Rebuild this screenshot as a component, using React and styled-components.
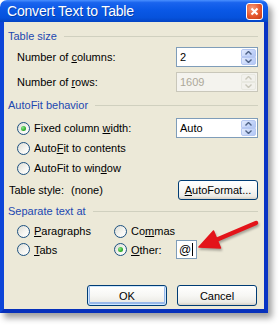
import React from 'react';
import styled, { createGlobalStyle, css } from 'styled-components';

const GlobalStyle = createGlobalStyle`
  html, body {
    margin: 0;
    padding: 0;
    background: #ffffff;
  }
  body {
    font-family: 'Liberation Sans', Arial, sans-serif;
    font-size: 11px;
    color: #000000;
  }
`;

const Page = styled.div`
  position: relative;
  width: 279px;
  height: 326px;
`;

const Window = styled.div`
  width: 268px;
  display: flex;
  flex-direction: column;
  border-radius: 7px 7px 0 0;
  box-shadow: 4px 5px 6px rgba(0, 0, 0, 0.38);
`;

const TitleBar = styled.div`
  height: 22px;
  display: flex;
  align-items: center;
  justify-content: space-between;
  padding: 0 5px 0 7px;
  border-radius: 7px 7px 0 0;
  background: linear-gradient(
    #4a90ff 0%,
    #1a64ee 12%,
    #0a58e6 45%,
    #0652dc 80%,
    #0444c4 100%
  );
  color: #ffffff;
`;

const Title = styled.span`
  font-family: 'Liberation Sans', Arial, sans-serif;
  font-size: 14px;
  letter-spacing: -0.2px;
  text-shadow: 1px 1px 0 rgba(0, 0, 0, 0.25);
`;

const CloseButton = styled.div`
  width: 15px;
  height: 15px;
  border: 1px solid #ffffff;
  border-radius: 3px;
  background: radial-gradient(circle at 35% 30%, #f59b7b 0%, #e5562c 55%, #c13a15 100%);
  display: flex;
  align-items: center;
  justify-content: center;
`;

const Frame = styled.div`
  border: 4px solid #0a3fd4;
  border-top: none;
  border-left-color: #0d45d8;
  border-right-color: #0833c4;
  border-bottom-color: #0630bb;
`;

const Client = styled.div`
  height: 287px;
  box-sizing: border-box;
  background: #ece9d8;
  padding: 7px 6px 3px 4px;
  display: flex;
  flex-direction: column;
`;

const GroupHeader = styled.div`
  height: 14px;
  display: flex;
  align-items: center;
  gap: 7px;
  color: #2248b0;
  margin-top: ${(p) => p.$top || 0}px;
  &::after {
    content: '';
    flex: 1;
    height: 1px;
    background: #d0d0bf;
  }
`;

const Row = styled.div`
  height: ${(p) => p.$h || 20}px;
  display: flex;
  align-items: center;
  justify-content: space-between;
  margin-top: ${(p) => p.$top || 0}px;
  padding-left: ${(p) => (p.$indent === undefined ? 9 : p.$indent)}px;
`;

const Label = styled.span`
  white-space: nowrap;
`;

const Field = styled.div`
  width: 82px;
  height: 20px;
  box-sizing: border-box;
  border: 1px solid ${(p) => (p.$disabled ? '#c9c7ba' : '#7f9db9')};
  background: ${(p) => (p.$disabled ? '#f4f3ee' : '#ffffff')};
  color: ${(p) => (p.$disabled ? '#aca899' : '#000000')};
  display: flex;
  align-items: center;
  justify-content: space-between;
  padding: 1px 1px 1px 3px;
`;

const SpinBox = styled.div`
  width: 15px;
  height: 16px;
  display: flex;
  flex-direction: column;
`;

const SpinHalf = styled.div`
  flex: 1;
  display: flex;
  align-items: center;
  justify-content: center;
  border: 1px solid ${(p) => (p.$disabled ? '#e8e8e0' : '#b6c8f2')};
  border-radius: ${(p) => (p.$up ? '2px 2px 0 0' : '0 0 2px 2px')};
  background: ${(p) =>
    p.$disabled
      ? '#f2f1ec'
      : 'linear-gradient(135deg, #e3ebfd 0%, #c4d4f9 60%, #b1c6f5 100%)'};
`;

const Spin = ({ disabled }) => {
  const color = disabled ? '#c9c7ba' : '#4d6185';
  return (
    <SpinBox>
      <SpinHalf $up $disabled={disabled}>
        <svg width="7" height="4" viewBox="0 0 7 4">
          <path d="M0.5 3.5 L3.5 0.5 L6.5 3.5" fill="none" stroke={color} strokeWidth="1.4" />
        </svg>
      </SpinHalf>
      <SpinHalf $disabled={disabled}>
        <svg width="7" height="4" viewBox="0 0 7 4">
          <path d="M0.5 0.5 L3.5 3.5 L6.5 0.5" fill="none" stroke={color} strokeWidth="1.4" />
        </svg>
      </SpinHalf>
    </SpinBox>
  );
};

const RadioWrap = styled.label`
  display: flex;
  align-items: center;
  gap: 4px;
  white-space: nowrap;
`;

const RadioCircle = styled.span`
  width: 13px;
  height: 13px;
  box-sizing: border-box;
  border-radius: 50%;
  border: 1px solid #1c5180;
  background: linear-gradient(135deg, #dcdcd4 0%, #f6f6f3 60%, #ffffff 100%);
  display: flex;
  align-items: center;
  justify-content: center;
  ${(p) =>
    p.$checked &&
    css`
      &::after {
        content: '';
        width: 5px;
        height: 5px;
        border-radius: 50%;
        background: radial-gradient(circle at 35% 35%, #8ee58c 0%, #2fae2d 60%, #1d8c1c 100%);
      }
    `}
`;

const Radio = ({ checked, children }) => (
  <RadioWrap>
    <RadioCircle $checked={checked} />
    <span>{children}</span>
  </RadioWrap>
);

const Button = styled.button`
  width: ${(p) => p.$w || 80}px;
  height: ${(p) => p.$h || 21}px;
  box-sizing: border-box;
  font-family: 'Liberation Sans', Arial, sans-serif;
  font-size: 11px;
  color: #000000;
  border: 1px solid #003c74;
  border-radius: 3px;
  background: linear-gradient(#ffffff 0%, #f7f7f4 50%, #ecebe6 85%, #d6d0c5 100%);
  padding: 0;
  ${(p) =>
    p.$default &&
    css`
      box-shadow: inset 0 0 0 1px #cee7ff, inset 0 -1px 0 2px #98b8ea;
    `}
`;

const StyleRow = styled.div`
  display: flex;
  gap: 7px;
`;

const SepGrid = styled.div`
  display: grid;
  grid-template-columns: 97px 62px 1fr;
  grid-template-rows: 18px 19px;
  align-items: center;
  padding-left: 9px;
  margin-top: 4px;
`;

const OtherField = styled.div`
  width: 21px;
  height: 19px;
  box-sizing: border-box;
  border: 1px solid #7f9db9;
  background: #ffffff;
  display: flex;
  align-items: center;
  padding-left: 2px;
  font-size: 12px;
`;

const Caret = styled.span`
  width: 1px;
  height: 13px;
  background: #000000;
  margin-left: 1px;
`;

const Footer = styled.div`
  display: flex;
  justify-content: flex-end;
  gap: 10px;
  margin-top: 26px;
  padding-right: 1px;
`;

const Arrow = styled.svg`
  position: absolute;
  left: 0;
  top: 0;
  pointer-events: none;
  filter: drop-shadow(1px 2px 1px rgba(0, 0, 0, 0.3));
`;

export default function App() {
  return (
    <>
      <GlobalStyle />
      <Page>
        <Window>
          <TitleBar>
            <Title>Convert Text to Table</Title>
            <CloseButton>
              <svg width="9" height="9" viewBox="0 0 9 9">
                <path d="M1.5 1.5 L7.5 7.5 M7.5 1.5 L1.5 7.5" stroke="#ffffff" strokeWidth="2" />
              </svg>
            </CloseButton>
          </TitleBar>
          <Frame>
            <Client>
              <GroupHeader>Table size</GroupHeader>
              <Row $top={4}>
                <Label>Number of <u>c</u>olumns:</Label>
                <Field>
                  <span>2</span>
                  <Spin />
                </Field>
              </Row>
              <Row $top={5}>
                <Label>Number of <u>r</u>ows:</Label>
                <Field $disabled>
                  <span>1609</span>
                  <Spin disabled />
                </Field>
              </Row>

              <GroupHeader $top={6}>AutoFit behavior</GroupHeader>
              <Row $top={6}>
                <Radio checked>Fixed column <u>w</u>idth:</Radio>
                <Field>
                  <span>Auto</span>
                  <Spin />
                </Field>
              </Row>
              <Row>
                <Radio>Auto<u>F</u>it to contents</Radio>
              </Row>
              <Row>
                <Radio>AutoFit to win<u>d</u>ow</Radio>
              </Row>
              <Row $top={2} $indent={1}>
                <StyleRow>
                  <span>Table style:</span>
                  <span>(none)</span>
                </StyleRow>
                <Button $w={80} $h={20}>
                  <u>A</u>utoFormat...
                </Button>
              </Row>

              <GroupHeader $top={4}>Separate text at</GroupHeader>
              <SepGrid>
                <Radio><u>P</u>aragraphs</Radio>
                <Radio>Co<u>m</u>mas</Radio>
                <span />
                <Radio><u>T</u>abs</Radio>
                <Radio checked><u>O</u>ther:</Radio>
                <OtherField>
                  @<Caret />
                </OtherField>
              </SepGrid>

              <Footer>
                <Button $default $w={80}>OK</Button>
                <Button $w={80}>Cancel</Button>
              </Footer>
            </Client>
          </Frame>
        </Window>
        <Arrow width="279" height="326" viewBox="0 0 279 326">
          <path d="M256 223 L216 240" stroke="#e3141a" strokeWidth="4.5" strokeLinecap="round" />
          <path d="M199 247 L220.5 248 L213.5 231 Z" fill="#e3141a" stroke="#e3141a" strokeWidth="1.5" strokeLinejoin="round" />
        </Arrow>
      </Page>
    </>
  );
}
